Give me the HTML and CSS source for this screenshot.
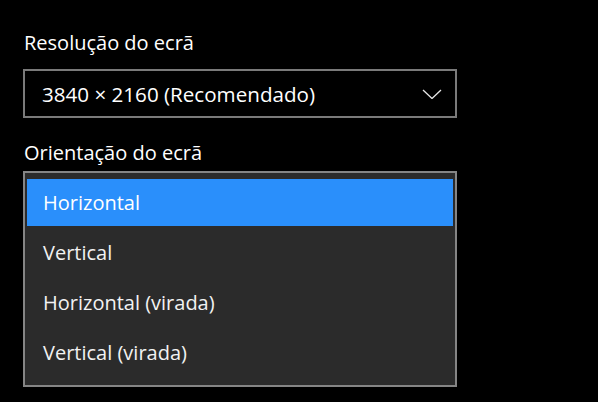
FILE: index.html
```html
<!DOCTYPE html>
<html lang="pt">
<head>
  <meta charset="UTF-8">
  <title>Ecrã</title>
  <link rel="stylesheet" href="styles.css">
</head>
<body>
  <div class="panel">
    <div class="field-label">Resolução do ecrã</div>
    <div class="combo">
      <span class="combo-value">3840 × 2160 (Recomendado)</span>
      <svg class="chevron" width="20" height="10" viewBox="0 0 20 10">
        <path d="M1 1 L10 9.5 L19 1" fill="none" stroke="#e6e6e6" stroke-width="1.3"/>
      </svg>
    </div>

    <div class="field-label second">Orientação do ecrã</div>
    <ul class="dropdown">
      <li class="option selected">Horizontal</li>
      <li class="option">Vertical</li>
      <li class="option">Horizontal (virada)</li>
      <li class="option">Vertical (virada)</li>
    </ul>
  </div>
</body>
</html>
```

FILE: styles.css
```css
body {
  margin: 0;
  background: #000;
  color: #fff;
  font-family: "Open Sans", "Noto Sans", sans-serif;
  height: 402px;
  overflow: hidden;
}

.panel {
  padding: 29px 0 0 23px;
  width: 434px;
}

.field-label {
  font-size: 20px;
  line-height: 28px;
  padding-left: 1px;
}

.field-label.second {
  margin-top: 21px;
}

.combo {
  margin-top: 12px;
  height: 45px;
  border: 2px solid #7a7a7a;
  display: flex;
  align-items: center;
  justify-content: space-between;
  padding: 0 13px 0 17px;
}

.combo-value {
  font-size: 20.6px;
}

.chevron {
  display: block;
}

.dropdown {
  list-style: none;
  margin: 4px 0 0;
  padding: 6px 2px 9px;
  background: #2b2b2b;
  border: 2px solid #858585;
}

.option {
  height: 47px;
  line-height: 47px;
  margin-bottom: 3px;
  padding-left: 16px;
  font-size: 20px;
  color: #f2f2f2;
}

.option:last-child {
  margin-bottom: 0;
}

.option.selected {
  background: #2a8ffb;
  color: #fff;
}
```
